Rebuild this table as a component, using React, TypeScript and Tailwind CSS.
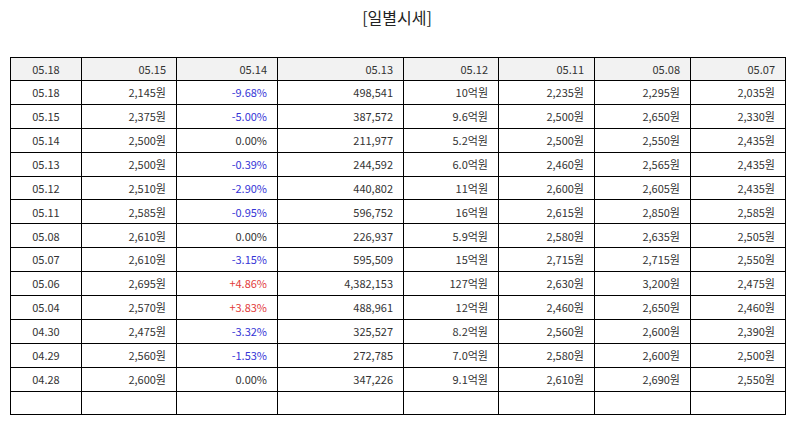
const header = ["05.18", "05.15", "05.14", "05.13", "05.12", "05.11", "05.08", "05.07"];

const rows: string[][] = [
  ["05.18", "2,145원", "-9.68%", "498,541", "10억원", "2,235원", "2,295원", "2,035원"],
  ["05.15", "2,375원", "-5.00%", "387,572", "9.6억원", "2,500원", "2,650원", "2,330원"],
  ["05.14", "2,500원", "0.00%", "211,977", "5.2억원", "2,500원", "2,550원", "2,435원"],
  ["05.13", "2,500원", "-0.39%", "244,592", "6.0억원", "2,460원", "2,565원", "2,435원"],
  ["05.12", "2,510원", "-2.90%", "440,802", "11억원", "2,600원", "2,605원", "2,435원"],
  ["05.11", "2,585원", "-0.95%", "596,752", "16억원", "2,615원", "2,850원", "2,585원"],
  ["05.08", "2,610원", "0.00%", "226,937", "5.9억원", "2,580원", "2,635원", "2,505원"],
  ["05.07", "2,610원", "-3.15%", "595,509", "15억원", "2,715원", "2,715원", "2,550원"],
  ["05.06", "2,695원", "+4.86%", "4,382,153", "127억원", "2,630원", "3,200원", "2,475원"],
  ["05.04", "2,570원", "+3.83%", "488,961", "12억원", "2,460원", "2,650원", "2,460원"],
  ["04.30", "2,475원", "-3.32%", "325,527", "8.2억원", "2,560원", "2,600원", "2,390원"],
  ["04.29", "2,560원", "-1.53%", "272,785", "7.0억원", "2,580원", "2,600원", "2,500원"],
  ["04.28", "2,600원", "0.00%", "347,226", "9.1억원", "2,610원", "2,690원", "2,550원"],
  ["", "", "", "", "", "", "", ""],
];

const widths = ["w-[71px]", "w-[95px]", "w-[101px]", "w-[126px]", "w-[95px]", "w-[96px]", "w-[96px]", "w-[95px]"];

function rateColor(v: string) {
  if (v.startsWith("-")) return "text-[#3535d6]";
  if (v.startsWith("+")) return "text-[#e23b3b]";
  return "text-[#333]";
}

export default function App() {
  return (
    <div
      className="w-[794px] h-[425px] bg-white text-[#333]"
      style={{ fontFamily: '"Noto Sans CJK KR", "Noto Sans", sans-serif' }}
    >
      <div className="h-[57px] pt-[5px] text-center text-[16px] leading-[24px] text-[#222]">[일별시세]</div>
      <table className="ml-[10px] w-[775px] table-fixed border-collapse text-[11px]">
        <colgroup>
          {widths.map((w, i) => (
            <col key={i} className={w} />
          ))}
        </colgroup>
        <thead>
          <tr className="h-[23px] bg-[#f2f2f2]">
            {header.map((h, i) => (
              <th
                key={i}
                className={`border border-black font-normal px-[10px] ${i === 0 ? "text-center" : "text-right"}`}
              >
                {h}
              </th>
            ))}
          </tr>
        </thead>
        <tbody>
          {rows.map((r, ri) => (
            <tr key={ri} className={ri === rows.length - 1 ? "h-[23px]" : "h-[23.9px]"}>
              {r.map((c, ci) => (
                <td
                  key={ci}
                  className={`border border-black px-[10px] ${ci === 0 ? "text-center" : "text-right"} ${
                    ci === 2 ? rateColor(c) : ""
                  }`}
                >
                  {c}
                </td>
              ))}
            </tr>
          ))}
        </tbody>
      </table>
    </div>
  );
}
